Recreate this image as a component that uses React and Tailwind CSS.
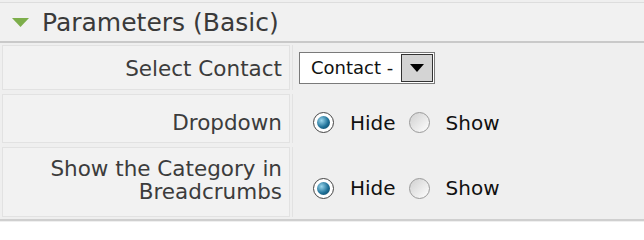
const Radio = ({ checked }) => (
  <span
    className={`w-[21px] h-[21px] rounded-full border flex items-center justify-center shrink-0 ${
      checked ? 'border-[#444] bg-white' : 'border-[#9a9a9a] bg-gradient-to-br from-[#d0d0d0] to-white'
    }`}
  >
    {checked && (
      <span className="w-[13px] h-[13px] rounded-full bg-[radial-gradient(circle_at_35%_35%,#9ad6ec,#1f7198_55%,#0c3c55)]" />
    )}
  </span>
)

const RadioGroup = () => (
  <div className="flex items-center text-[20px] leading-[24px] text-[#111] ml-[20px]">
    <Radio checked />
    <span className="ml-[16px]">Hide</span>
    <span className="ml-[13px]"><Radio /></span>
    <span className="ml-[16px]">Show</span>
  </div>
)

const Row = ({ label, children, h, pad }) => (
  <div className={`flex ${h}`}>
    <div className={`w-[288px] ml-[2px] border border-[#e2e2e2] bg-[#f2f2f2] flex items-center justify-end pr-[7px] ${pad} text-right text-[21.5px] leading-[23px] text-[#3c3c3c]`}>
      {label}
    </div>
    <div className="flex-1 flex items-center border-l border-[#e2e2e2] ml-[2px]">
      {children}
    </div>
  </div>
)

export default function App() {
  return (
    <div
      className="w-[644px] h-[222px] bg-[#efefef] overflow-hidden"
      style={{ fontFamily: '"DejaVu Sans", Verdana, sans-serif' }}
    >
      {/* header */}
      <div className="mt-[2px] border-t border-[#dddddd] h-[41px] flex items-center border-b-2 border-b-[#c9c9c9] bg-[#f1f1f1]">
        <svg width="17" height="10" viewBox="0 0 17 10" className="ml-[12px] mt-[1px]">
          <polygon points="0,0 17,0 8.5,9" fill="#7dae4b" />
        </svg>
        <span className="ml-[13px] mt-[2px] text-[25px] leading-[30px] text-[#3a3a3a]">Parameters (Basic)</span>
      </div>

      <div className="flex flex-col gap-[4px] mt-[2px]">
        <Row label="Select Contact" h="h-[45px]" pad="pt-[2px]">
          <div className="ml-[6px] flex items-center h-[32px] border border-[#7a7a7a] bg-white">
            <span className="pl-[11px] pr-[8px] text-[18px] text-[#111]">Contact -</span>
            <span className="w-[32px] h-[28px] mr-[1px] border border-[#333] bg-[#d4d4d4] flex items-center justify-center">
              <svg width="14" height="8" viewBox="0 0 14 8"><polygon points="0,0 14,0 7,8" fill="#000" /></svg>
            </span>
          </div>
        </Row>
        <Row label="Dropdown" h="h-[49px]" pad="pt-[7px]">
          <div className="mt-[8px]"><RadioGroup /></div>
        </Row>
        <Row label={<span>Show the Category in<br />Breadcrumbs</span>} h="h-[70px]" pad="pb-[4px]">
          <div className="mt-[12px]"><RadioGroup /></div>
        </Row>
      </div>
      <div className="mt-[2px] border-t-2 border-[#cfcfcf]" />
    </div>
  )
}
